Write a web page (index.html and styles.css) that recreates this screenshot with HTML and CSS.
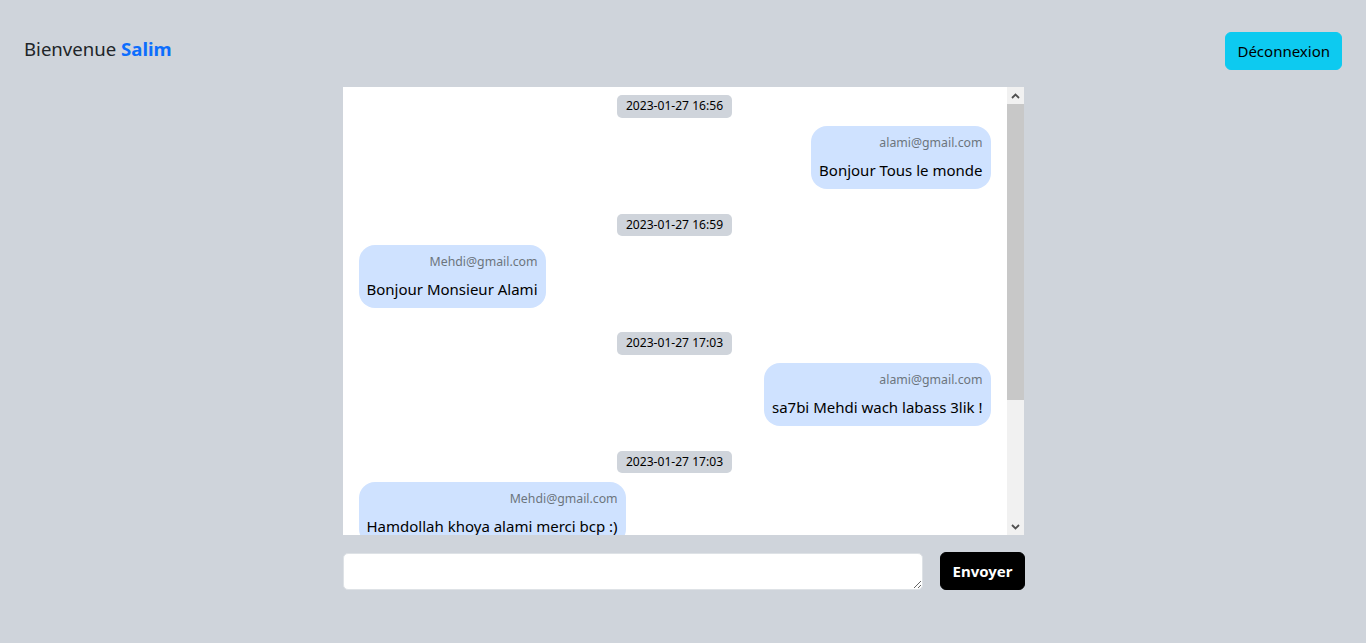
FILE: index.html
```html
<!DOCTYPE html>
<html lang="fr">
<head>
<meta charset="utf-8">
<title>Chat</title>
<link rel="stylesheet" href="styles.css">
</head>
<body>
<header class="top">
  <div class="welcome">Bienvenue <span class="name">Salim</span></div>
  <button class="btn-logout">Déconnexion</button>
</header>
<main class="chat-wrap">
  <div class="chat">
    <div class="messages">
      <div class="msg-group">
        <div class="date"><span>2023-01-27 16:56</span></div>
        <div class="bubble right">
          <div class="email">alami@gmail.com</div>
          <div class="text">Bonjour Tous le monde</div>
        </div>
      </div>
      <div class="msg-group">
        <div class="date"><span>2023-01-27 16:59</span></div>
        <div class="bubble left">
          <div class="email">Mehdi@gmail.com</div>
          <div class="text">Bonjour Monsieur Alami</div>
        </div>
      </div>
      <div class="msg-group">
        <div class="date"><span>2023-01-27 17:03</span></div>
        <div class="bubble right">
          <div class="email">alami@gmail.com</div>
          <div class="text">sa7bi Mehdi wach labass 3lik !</div>
        </div>
      </div>
      <div class="msg-group">
        <div class="date"><span>2023-01-27 17:03</span></div>
        <div class="bubble left">
          <div class="email">Mehdi@gmail.com</div>
          <div class="text">Hamdollah khoya alami merci bcp :)</div>
        </div>
      </div>
    </div>
    <div class="scrollbar">
      <div class="sb-btn">
        <svg width="9" height="6" viewBox="0 0 9 6"><polyline points="1,5 4.5,1.5 8,5" fill="none" stroke="#505050" stroke-width="1.8"/></svg>
      </div>
      <div class="sb-thumb"></div>
      <div class="sb-track"></div>
      <div class="sb-btn">
        <svg width="9" height="6" viewBox="0 0 9 6"><polyline points="1,1 4.5,4.5 8,1" fill="none" stroke="#505050" stroke-width="1.8"/></svg>
      </div>
    </div>
  </div>
  <form class="send-row">
    <textarea class="input"></textarea>
    <button type="button" class="btn-send">Envoyer</button>
  </form>
</main>
</body>
</html>
```
FILE: styles.css
```css
* { box-sizing: border-box; }
html, body { margin: 0; padding: 0; }
body {
  background: #cfd4db;
  font-family: "Noto Sans", "Open Sans", sans-serif;
  color: #212529;
  height: 643px;
  overflow: hidden;
}
.top {
  display: flex;
  justify-content: space-between;
  align-items: center;
  padding: 32px 24px 0 24px;
}
.welcome {
  font-size: 18.6px;
  line-height: 28px;
  margin-top: -4px;
}
.name { color: #0d6efd; font-weight: 700; }
.btn-logout {
  font-family: inherit;
  font-size: 15px;
  line-height: 24px;
  padding: 6px 11px;
  border: 1px solid #0dcaf0;
  background: #0dcaf0;
  color: #000;
  border-radius: 6px;
}
.chat-wrap {
  width: 681px;
  margin: 17px auto 0;
}
.chat {
  display: flex;
  background: #fff;
  height: 448px;
}
.messages {
  flex: 1;
  overflow: hidden;
  padding: 8px 16px 0 16px;
}
.scrollbar {
  width: 17px;
  display: flex;
  flex-direction: column;
  background: #f1f1f1;
}
.sb-btn {
  height: 17px;
  display: flex;
  align-items: center;
  justify-content: center;
}
.sb-thumb {
  height: 296px;
  background: #c8c8c8;
}
.sb-track { flex: 1; }
.msg-group {
  display: flex;
  flex-direction: column;
  margin-bottom: 24.5px;
}
.date {
  display: flex;
  justify-content: center;
  margin-bottom: 8.5px;
}
.date span {
  background: #cfd4db;
  color: #000;
  font-size: 12.1px;
  line-height: 22.5px;
  padding: 0 9px;
  border-radius: 5px;
}
.bubble {
  background: #cfe2ff;
  border-radius: 16px;
  padding: 7px 8px 7px 8px;
  text-align: right;
}
.bubble.right { align-self: flex-end; }
.bubble.left { align-self: flex-start; }
.email {
  font-size: 12.3px;
  line-height: 20px;
  color: #6c757d;
  margin-bottom: 5px;
}
.text {
  font-size: 15px;
  line-height: 24px;
  color: #000;
}
.send-row {
  display: flex;
  align-items: center;
  gap: 17px;
  margin-top: 17px;
  margin-right: -1px;
}
.input {
  flex: 1;
  height: 37px;
  border: 1px solid #dee2e6;
  border-radius: 5px;
  background: #fff;
  resize: vertical;
}
.btn-send {
  font-family: inherit;
  font-weight: 700;
  font-size: 15px;
  line-height: 24px;
  padding: 6px 11px;
  border: 1px solid #000;
  background: #000;
  color: #fff;
  border-radius: 6px;
}
```
